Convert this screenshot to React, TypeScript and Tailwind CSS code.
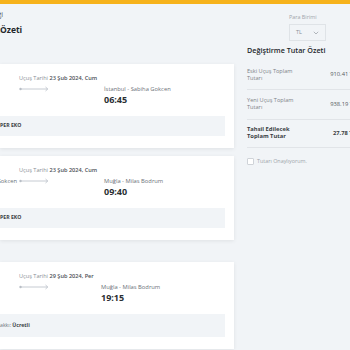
import React from "react";

const Arrow = () => (
  <svg width="30" height="6" viewBox="0 0 30 6" className="shrink-0">
    <circle cx="1.5" cy="3" r="1.2" fill="#b8bec6" />
    <line x1="2" y1="3" x2="28.5" y2="3" stroke="#b8bec6" strokeWidth="0.8" />
    <path d="M26.5 1 L28.8 3 L26.5 5" fill="none" stroke="#b8bec6" strokeWidth="0.8" />
  </svg>
);

const Cut = ({ text, className }: { text: string; className?: string }) => (
  <span className={"w-0 flex justify-end whitespace-nowrap " + (className || "")}>{text}</span>
);

type CardProps = {
  date: string;
  city: string;
  time: string;
  dep?: string;
  strip: React.ReactNode;
  mt: string;
  cityOffset: string;
  stripH: string;
};

const Card = ({ date, city, time, dep, strip, mt, cityOffset, stripH }: CardProps) => (
  <div className={"w-[234px] bg-white pt-[10px] pb-[12px] pr-[9px] shadow-[0_1px_4px_rgba(0,0,0,0.08)] " + mt}>
    <div className="pl-[19px] h-[8px] leading-[8px] text-[5.6px] text-[#8a8f96] whitespace-nowrap">
      Uçuş Tarihi <span className="font-semibold text-[#4a4f55]">{date}</span>
    </div>
    <div className="flex mt-[3px] items-start">
      <div className="w-[17px] flex justify-end h-[8px] items-center">
        {dep ? <Cut text={dep} className="text-[5.8px] leading-[8px] text-[#6b7178]" /> : null}
      </div>
      <div className="ml-[2px] h-[8px] flex items-center">
        <Arrow />
      </div>
      <div className={"flex flex-col " + cityOffset}>
        <div className="h-[8px] leading-[8px] text-[5.8px] text-[#6b7178] whitespace-nowrap">{city}</div>
        <div className="mt-[1px] h-[12px] leading-[12px] text-[9px] font-bold text-[#2b2f33]">{time}</div>
      </div>
    </div>
    <div className={"mt-[10px] bg-[#f1f4f7] flex items-center text-[5.2px] text-[#3a3f44] whitespace-nowrap " + stripH}>
      {strip}
    </div>
  </div>
);

export default function App() {
  return (
    <div
      className="w-[350px] h-[350px] overflow-hidden bg-[#f1f4f7] text-[#333]"
      style={{ fontFamily: '"Open Sans", "Noto Sans", sans-serif' }}
    >
      <div className="h-[4px] bg-[#f6b21b]" />
      <div className="flex items-start">
        {/* Left column */}
        <div className="w-[234px] shrink-0">
          <div className="h-[60px] pt-[7px]">
            <div className="flex h-[8px] items-center text-[7px] text-[#55595e] ml-[3px]">
              <Cut text="Uçuş Değişikliği" />
            </div>
            <div className="flex mt-[4px] h-[14px] items-center text-[8.5px] font-bold text-[#23272b]">
              <Cut text="Değişiklik " />
              <span>Özeti</span>
            </div>
          </div>
          <Card
            date="23 Şub 2024, Cum"
            city="İstanbul - Sabiha Gokcen"
            time="06:45"
            strip={
              <>
                <Cut text="SÜ" className="font-bold" />
                <span className="font-bold">PER EKO</span>
              </>
            }
            mt="mt-0"
            cityOffset="ml-[55px]"
            stripH="h-[20px]"
          />
          <Card
            date="23 Şub 2024, Cum"
            city="Muğla - Milas Bodrum"
            time="09:40"
            dep="İstanbul - Sabiha Gokcen"
            strip={
              <>
                <Cut text="SÜ" className="font-bold" />
                <span className="font-bold">PER EKO</span>
              </>
            }
            mt="mt-[8px]"
            cityOffset="ml-[55px]"
            stripH="h-[20px]"
          />
          <Card
            date="29 Şub 2024, Per"
            city="Muğla - Milas Bodrum"
            time="19:15"
            strip={
              <>
                <Cut text="Değişiklik H" className="text-[#6b7178]" />
                <span className="text-[#6b7178]">akkı:&nbsp;</span>
                <span className="font-bold text-[#3a3f44]">Ücretli</span>
              </>
            }
            mt="mt-[22px]"
            cityOffset="ml-[52px]"
            stripH="h-[23px]"
          />
        </div>
        {/* Right column */}
        <div className="ml-[13px] w-[109px] shrink-0">
          <div className="ml-[42px] mt-[10px]">
            <div className="h-[7px] leading-[7px] text-[5.4px] text-[#a0a5ab]">Para Birimi</div>
            <div className="mt-[3px] w-[37px] h-[17px] border border-[#dfe3e7] flex items-center justify-between px-[6px]">
              <span className="text-[5.6px] text-[#8a8f96]">TL</span>
              <svg width="6" height="4" viewBox="0 0 6 4">
                <path d="M0.8 0.8 L3 3 L5.2 0.8" fill="none" stroke="#a0a5ab" strokeWidth="0.8" />
              </svg>
            </div>
          </div>
          <div className="mt-[5px] h-[9px] leading-[9px] text-[7.2px] font-semibold text-[#23272b] whitespace-nowrap">
            Değiştirme Tutar Özeti
          </div>
          <div className="mt-[5px]">
            <div className="flex items-center justify-between pt-[7.5px] pb-[7.5px] border-b border-[#e1e4e8]">
              <div className="text-[5.6px] leading-[7px] text-[#7d8288]">
                Eski Uçuş Toplam<br />Tutarı
              </div>
              <div className="text-[5.8px] text-[#55595e] whitespace-nowrap">910.41 TL</div>
            </div>
            <div className="flex items-center justify-between pt-[7px] pb-[7.5px] border-b border-[#e1e4e8]">
              <div className="text-[5.6px] leading-[7px] text-[#7d8288]">
                Yeni Uçuş Toplam<br />Tutarı
              </div>
              <div className="text-[5.8px] text-[#55595e] whitespace-nowrap">938.19 TL</div>
            </div>
            <div className="flex items-center justify-between pt-[6.5px] pb-[7px] border-b border-[#e1e4e8]">
              <div className="text-[5.8px] leading-[7px] font-bold text-[#3a3f44]">
                Tahsil Edilecek<br />Toplam Tutar
              </div>
              <div className="text-[5.8px] font-bold text-[#3a3f44] whitespace-nowrap">27.78 TL</div>
            </div>
          </div>
          <div className="mt-[9px] flex items-center">
            <div className="w-[7px] h-[7px] border border-[#cfd3d8] bg-white rounded-[1px]" />
            <span className="ml-[3px] text-[5.4px] text-[#a0a5ab]">Tutarı Onaylıyorum.</span>
          </div>
        </div>
      </div>
    </div>
  );
}
